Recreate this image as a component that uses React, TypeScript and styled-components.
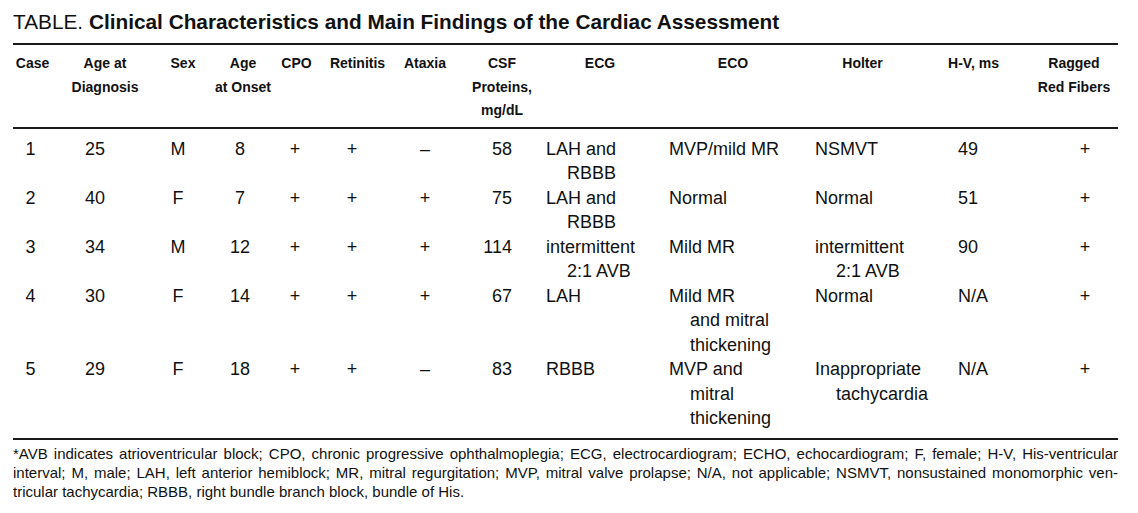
import React from "react";
import styled, { createGlobalStyle } from "styled-components";

const GlobalStyle = createGlobalStyle`
  html, body {
    margin: 0;
    padding: 0;
    background: #fff;
  }
  body {
    color: #111;
    font-family: "Liberation Sans", Arial, sans-serif;
  }
`;

const COLS = "47px 90px 60px 66px 44px 75px 65px 80px 120px 140px 125px 105px 88px";

type Col = {
  head: string[];
  hpl?: number;
  hpr?: number;
  align: "left" | "center" | "right";
  pl?: number;
  pr?: number;
};

const columns: Col[] = [
  { head: ["Case"], hpr: 8, align: "center", pr: 12 },
  { head: ["Age at", "Diagnosis"], align: "center", pr: 20 },
  { head: ["Sex"], hpl: 6, align: "center", pr: 4 },
  { head: ["Age", "at Onset"], align: "center", pr: 6 },
  { head: ["CPO"], hpr: 3, align: "center", pr: 6 },
  { head: ["Retinitis"], align: "center", pr: 11 },
  { head: ["Ataxia"], hpr: 5, align: "center", pr: 5 },
  { head: ["CSF", "Proteins,", "mg/dL"], hpl: 4, align: "right", pr: 28 },
  { head: ["ECG"], align: "left", pl: 6 },
  { head: ["ECO"], hpl: 6, align: "left", pl: 9 },
  { head: ["Holter"], align: "left", pl: 15 },
  { head: ["H-V, ms"], hpr: 8, align: "left", pl: 33 },
  { head: ["Ragged", "Red Fibers"], align: "center", pl: 22 },
];

type CellValue = string | string[];

const rows: CellValue[][] = [
  ["1", "25", "M", "8", "+", "+", "–", "58", ["LAH and", "RBBB"], ["MVP/mild MR"], ["NSMVT"], "49", "+"],
  ["2", "40", "F", "7", "+", "+", "+", "75", ["LAH and", "RBBB"], ["Normal"], ["Normal"], "51", "+"],
  ["3", "34", "M", "12", "+", "+", "+", "114", ["intermittent", "2:1 AVB"], ["Mild MR"], ["intermittent", "2:1 AVB"], "90", "+"],
  ["4", "30", "F", "14", "+", "+", "+", "67", ["LAH"], ["Mild MR", "and mitral", "thickening"], ["Normal"], "N/A", "+"],
  ["5", "29", "F", "18", "+", "+", "–", "83", ["RBBB"], ["MVP and", "mitral", "thickening"], ["Inappropriate", "tachycardia"], "N/A", "+"],
];

const footnote = [
  "*AVB indicates atrioventricular block; CPO, chronic progressive ophthalmoplegia; ECG, electrocardiogram; ECHO, echocardiogram; F, female; H-V, His-ventricular",
  "interval; M, male; LAH, left anterior hemiblock; MR, mitral regurgitation; MVP, mitral valve prolapse; N/A, not applicable; NSMVT, nonsustained monomorphic ven-",
  "tricular tachycardia; RBBB, right bundle branch block, bundle of His.",
];

const App = () => {
  return (
    <Page>
      <GlobalStyle />
      <Title>
        TABLE. <Strong>Clinical Characteristics and Main Findings of the Cardiac Assessment</Strong>
      </Title>

      <Head>
        {columns.map((c, i) => (
          <HeadCell key={i} $pl={c.hpl ?? 0} $pr={c.hpr ?? 0}>
            {c.head.map((l) => (
              <div key={l}>{l}</div>
            ))}
          </HeadCell>
        ))}
      </Head>

      <Body>
        {rows.map((row, r) => (
          <Row key={r}>
            {row.map((v, i) => {
              const c = columns[i];
              const lines = Array.isArray(v) ? v : [v];
              return (
                <Cell key={i} $align={c.align} $pl={c.pl ?? 0} $pr={c.pr ?? 0}>
                  {lines.map((l, k) => (
                    <Line key={k} $indent={k > 0}>
                      {l}
                    </Line>
                  ))}
                </Cell>
              );
            })}
          </Row>
        ))}
      </Body>

      <Footnote>
        {footnote.map((l, i) => (
          <NoteLine key={i} $last={i === footnote.length - 1}>
            {l}
          </NoteLine>
        ))}
      </Footnote>
    </Page>
  );
};

export default App;

const Page = styled.div`
  width: 1105px;
  padding: 10px 0 0 13px;
`;

const Title = styled.div`
  font-size: 20.8px;
  line-height: 24px;
  margin-bottom: 9px;
  white-space: nowrap;
`;

const Strong = styled.span`
  font-weight: bold;
`;

const Head = styled.div`
  display: grid;
  grid-template-columns: ${COLS};
  border-top: 2px solid #1a1a1a;
  border-bottom: 2px solid #1a1a1a;
  padding: 7px 0 4px;
  font-weight: bold;
  font-size: 14px;
  line-height: 23.5px;
`;

const HeadCell = styled.div<{ $pl: number; $pr: number }>`
  text-align: center;
  padding-left: ${(p) => p.$pl}px;
  padding-right: ${(p) => p.$pr}px;
  white-space: nowrap;
`;

const Body = styled.div`
  padding: 8px 0 7px;
  border-bottom: 2px solid #1a1a1a;
  font-size: 18px;
  line-height: 24.5px;
`;

const Row = styled.div`
  display: grid;
  grid-template-columns: ${COLS};
`;

const Cell = styled.div<{ $align: string; $pl: number; $pr: number }>`
  text-align: ${(p) => p.$align};
  padding-left: ${(p) => p.$pl}px;
  padding-right: ${(p) => p.$pr}px;
  white-space: nowrap;
`;

const Line = styled.div<{ $indent: boolean }>`
  padding-left: ${(p) => (p.$indent ? 21 : 0)}px;
`;

const Footnote = styled.div`
  margin-top: 4px;
  font-size: 15px;
  line-height: 19px;
`;

const NoteLine = styled.div<{ $last: boolean }>`
  text-align: left;
  text-align-last: ${(p) => (p.$last ? "left" : "justify")};
`;
